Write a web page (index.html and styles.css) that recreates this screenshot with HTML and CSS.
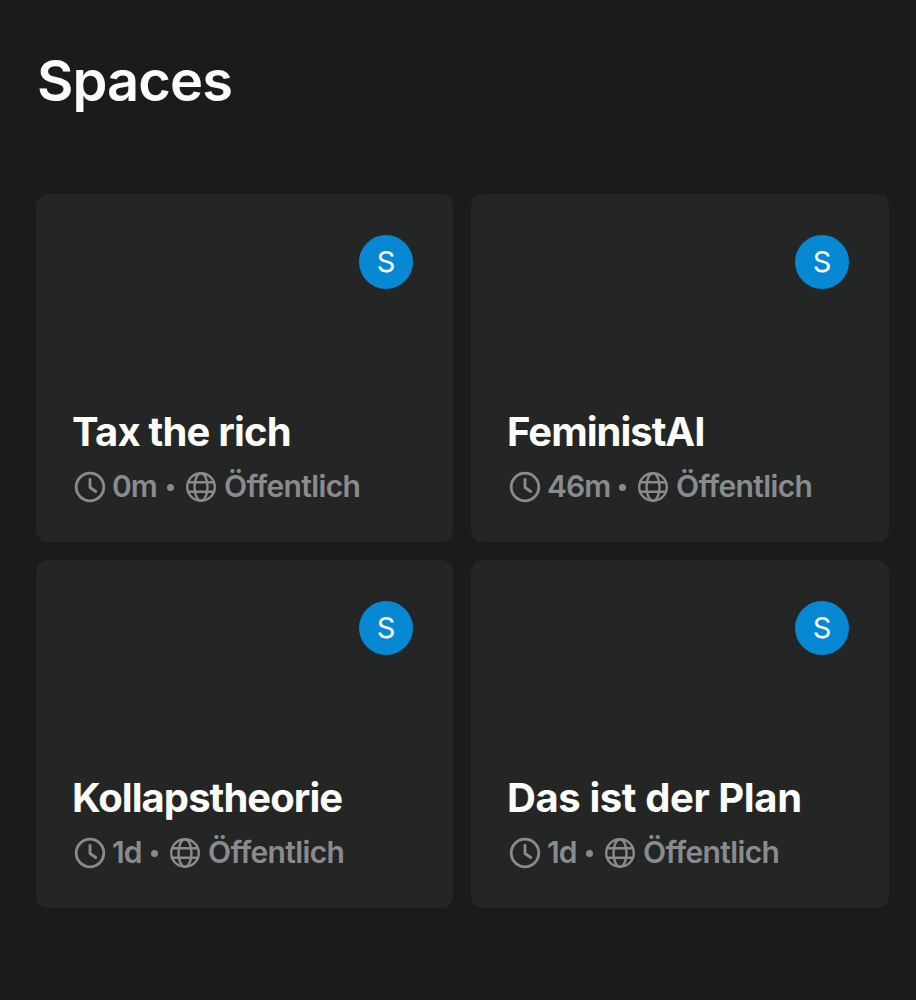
FILE: index.html
```html
<!DOCTYPE html>
<html lang="de">
<head>
<meta charset="utf-8">
<title>Spaces</title>
<link rel="stylesheet" href="styles.css">
</head>
<body>
<svg width="0" height="0" class="defs">
  <symbol id="clock" viewBox="0 0 32 32"><circle cx="16" cy="16" r="13.800"/><path d="M16 8.500V16.500L21.800 20.500"/></symbol>
  <symbol id="globe" viewBox="0 0 32 32"><circle cx="16" cy="16" r="13.800"/><ellipse cx="16" cy="16" rx="6.500" ry="13.800"/><path d="M3 11.300H29M3 20.700H29"/></symbol>
</svg>
<main class="page">
  <h1 class="title">Spaces</h1>
  <section class="grid">
    <article class="card">
      <div class="avatar">S</div>
      <h2 class="name n1">Tax the rich</h2>
      <div class="meta"><svg class="icon clock"><use href="#clock"/></svg><span class="time t1">0m</span><i class="dot"></i><svg class="icon globe"><use href="#globe"/></svg><span class="vis">Öffentlich</span></div>
    </article>
    <article class="card">
      <div class="avatar">S</div>
      <h2 class="name n2">FeministAI</h2>
      <div class="meta"><svg class="icon clock"><use href="#clock"/></svg><span class="time t2">46m</span><i class="dot"></i><svg class="icon globe"><use href="#globe"/></svg><span class="vis">Öffentlich</span></div>
    </article>
    <article class="card">
      <div class="avatar">S</div>
      <h2 class="name n3">Kollapstheorie</h2>
      <div class="meta"><svg class="icon clock"><use href="#clock"/></svg><span class="time t3">1d</span><i class="dot"></i><svg class="icon globe"><use href="#globe"/></svg><span class="vis">Öffentlich</span></div>
    </article>
    <article class="card">
      <div class="avatar">S</div>
      <h2 class="name n4">Das ist der Plan</h2>
      <div class="meta"><svg class="icon clock"><use href="#clock"/></svg><span class="time t3">1d</span><i class="dot"></i><svg class="icon globe"><use href="#globe"/></svg><span class="vis">Öffentlich</span></div>
    </article>
  </section>
</main>
</body>
</html>
```
FILE: styles.css
```css
* { box-sizing: border-box; }
body { margin: 0; background: #1a1b1b; color: #fbfbf7; font-family: Inter, "Liberation Sans", sans-serif; }
.defs { position: absolute; }
.page { height: 1000px; padding: 48px 27px 0 36px; }
.title { margin: 0 0 82px; padding-left: 1px; height: 64px; font-size: 56px; line-height: 66px; font-weight: 560; letter-spacing: -0.900px; }
.grid { display: grid; grid-template-columns: 417px 418px; grid-auto-rows: 348px; gap: 18px; }
.card { display: flex; flex-direction: column; padding: 41px 40px 0 36px; background: #242525; border-radius: 12px; }
.avatar { align-self: flex-end; width: 54px; height: 54px; border-radius: 50%; background: #0788d3; font-size: 29px; line-height: 54px; text-align: center; }
.name { margin: 119px 0 0; height: 48px; font-size: 40px; line-height: 48px; font-weight: 650; white-space: nowrap; }
.n1 { letter-spacing: -0.800px; }
.n2 { letter-spacing: -1px; }
.n3 { letter-spacing: -0.950px; }
.n4 { letter-spacing: -0.400px; }
.meta { display: flex; align-items: center; height: 40px; margin-top: 11px; padding-left: 1px; color: #898c8e; font-size: 30px; line-height: 38px; font-weight: 620; white-space: nowrap; }
.icon { flex: none; width: 32px; height: 32px; fill: none; stroke: currentColor; stroke-width: 2.800; stroke-linecap: round; stroke-linejoin: round; }
.clock { margin: 0 6px 0 1px; }
.globe { margin-right: 7px; stroke-width: 2.400; }
.time, .vis { padding-bottom: 2px; }
.time { flex: none; letter-spacing: -1px; }
.t1 { width: 48px; }
.t2 { width: 65px; }
.t3 { width: 32px; }
.dot { flex: none; width: 7px; height: 7px; margin: 0 11px 0 7px; border-radius: 50%; background: currentColor; }
.vis { letter-spacing: -0.650px; }
```
